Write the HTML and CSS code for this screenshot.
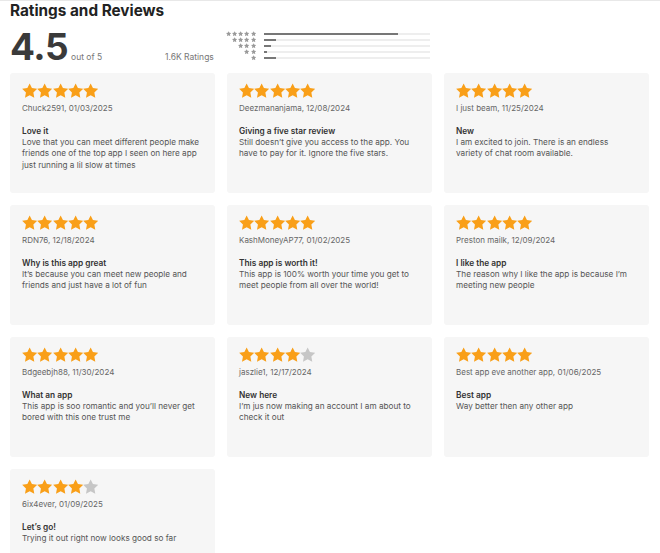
FILE: index.html
```html
<!DOCTYPE html>
<html>
<head>
<meta charset="utf-8">
<link rel="stylesheet" href="styles.css">
</head>
<body>
<svg width="0" height="0" style="position:absolute">
  <defs>
    <symbol id="star" viewBox="0 0 24 24"><path d="M12 .6l3.67 7.57 8.33 1.15-6.06 5.83 1.48 8.28L12 19.46l-7.42 3.97 1.48-8.28L0 9.32l8.33-1.15z"/></symbol>
  </defs>
</svg>
<div class="page">
  <h1 class="title">Ratings and Reviews</h1>
  <div class="summary">
    <div class="score"><span class="big">4.5</span><span class="outof">out of 5</span></div>
    <div class="count">1.6K Ratings</div>
    <div class="hist">
      <div class="hrow"><div class="hstars"><svg class="hs"><use href="#star"/></svg><svg class="hs"><use href="#star"/></svg><svg class="hs"><use href="#star"/></svg><svg class="hs"><use href="#star"/></svg><svg class="hs"><use href="#star"/></svg></div><div class="track"><div class="fill" style="width:81%"></div></div></div>
      <div class="hrow"><div class="hstars"><svg class="hs"><use href="#star"/></svg><svg class="hs"><use href="#star"/></svg><svg class="hs"><use href="#star"/></svg><svg class="hs"><use href="#star"/></svg></div><div class="track"><div class="fill" style="width:7%"></div></div></div>
      <div class="hrow"><div class="hstars"><svg class="hs"><use href="#star"/></svg><svg class="hs"><use href="#star"/></svg><svg class="hs"><use href="#star"/></svg></div><div class="track"><div class="fill" style="width:4%"></div></div></div>
      <div class="hrow"><div class="hstars"><svg class="hs"><use href="#star"/></svg><svg class="hs"><use href="#star"/></svg></div><div class="track"><div class="fill" style="width:2%"></div></div></div>
      <div class="hrow"><div class="hstars"><svg class="hs"><use href="#star"/></svg></div><div class="track"><div class="fill" style="width:7%"></div></div></div>
    </div>
  </div>
  <div class="grid">
    <div class="card">
      <div class="stars"><svg class="s on"><use href="#star"/></svg><svg class="s on"><use href="#star"/></svg><svg class="s on"><use href="#star"/></svg><svg class="s on"><use href="#star"/></svg><svg class="s on"><use href="#star"/></svg></div>
      <div class="author">Chuck2591, 01/03/2025</div>
      <div class="rtitle">Love it</div>
      <div class="body">Love that you can meet different people make friends one of the top app I seen on here app just running a lil slow at times</div>
    </div>
    <div class="card">
      <div class="stars"><svg class="s on"><use href="#star"/></svg><svg class="s on"><use href="#star"/></svg><svg class="s on"><use href="#star"/></svg><svg class="s on"><use href="#star"/></svg><svg class="s on"><use href="#star"/></svg></div>
      <div class="author">Deezmananjama, 12/08/2024</div>
      <div class="rtitle">Giving a five star review</div>
      <div class="body">Still doesn’t give you access to the app. You have to pay for it. Ignore the five stars.</div>
    </div>
    <div class="card">
      <div class="stars"><svg class="s on"><use href="#star"/></svg><svg class="s on"><use href="#star"/></svg><svg class="s on"><use href="#star"/></svg><svg class="s on"><use href="#star"/></svg><svg class="s on"><use href="#star"/></svg></div>
      <div class="author">I just beam, 11/25/2024</div>
      <div class="rtitle">New</div>
      <div class="body">I am excited to join. There is an endless variety of chat room available.</div>
    </div>
    <div class="card">
      <div class="stars"><svg class="s on"><use href="#star"/></svg><svg class="s on"><use href="#star"/></svg><svg class="s on"><use href="#star"/></svg><svg class="s on"><use href="#star"/></svg><svg class="s on"><use href="#star"/></svg></div>
      <div class="author">RDN76, 12/18/2024</div>
      <div class="rtitle">Why is this app great</div>
      <div class="body">It’s because you can meet new people and friends and just have a lot of fun</div>
    </div>
    <div class="card">
      <div class="stars"><svg class="s on"><use href="#star"/></svg><svg class="s on"><use href="#star"/></svg><svg class="s on"><use href="#star"/></svg><svg class="s on"><use href="#star"/></svg><svg class="s on"><use href="#star"/></svg></div>
      <div class="author">KashMoneyAP77, 01/02/2025</div>
      <div class="rtitle">This app is worth it!</div>
      <div class="body">This app is 100% worth your time you get to meet people from all over the world!</div>
    </div>
    <div class="card">
      <div class="stars"><svg class="s on"><use href="#star"/></svg><svg class="s on"><use href="#star"/></svg><svg class="s on"><use href="#star"/></svg><svg class="s on"><use href="#star"/></svg><svg class="s on"><use href="#star"/></svg></div>
      <div class="author">Preston mailk, 12/09/2024</div>
      <div class="rtitle">I like the app</div>
      <div class="body">The reason why I like the app is because I’m meeting new people</div>
    </div>
    <div class="card">
      <div class="stars"><svg class="s on"><use href="#star"/></svg><svg class="s on"><use href="#star"/></svg><svg class="s on"><use href="#star"/></svg><svg class="s on"><use href="#star"/></svg><svg class="s on"><use href="#star"/></svg></div>
      <div class="author">Bdgeebjh88, 11/30/2024</div>
      <div class="rtitle">What an app</div>
      <div class="body">This app is soo romantic and you’ll never get bored with this one trust me</div>
    </div>
    <div class="card">
      <div class="stars"><svg class="s on"><use href="#star"/></svg><svg class="s on"><use href="#star"/></svg><svg class="s on"><use href="#star"/></svg><svg class="s on"><use href="#star"/></svg><svg class="s off"><use href="#star"/></svg></div>
      <div class="author">jaszlie1, 12/17/2024</div>
      <div class="rtitle">New here</div>
      <div class="body">I’m jus now making an account I am about to check it out</div>
    </div>
    <div class="card">
      <div class="stars"><svg class="s on"><use href="#star"/></svg><svg class="s on"><use href="#star"/></svg><svg class="s on"><use href="#star"/></svg><svg class="s on"><use href="#star"/></svg><svg class="s on"><use href="#star"/></svg></div>
      <div class="author">Best app eve another app, 01/06/2025</div>
      <div class="rtitle">Best app</div>
      <div class="body">Way better then any other app</div>
    </div>
    <div class="card">
      <div class="stars"><svg class="s on"><use href="#star"/></svg><svg class="s on"><use href="#star"/></svg><svg class="s on"><use href="#star"/></svg><svg class="s on"><use href="#star"/></svg><svg class="s off"><use href="#star"/></svg></div>
      <div class="author">6ix4ever, 01/09/2025</div>
      <div class="rtitle">Let’s go!</div>
      <div class="body">Trying it out right now looks good so far</div>
    </div>
  </div>
</div>
</body>
</html>
```
FILE: styles.css
```css
* { box-sizing: border-box; }
html, body { margin: 0; padding: 0; background: #fff; }
body {
  font-family: Inter, "Noto Sans", "Liberation Sans", sans-serif;
  color: #333;
  overflow: hidden;
  border-top: 1px solid #e8e8e8;
}
.page { padding: 0 11px 0 10px; }
.title {
  margin: 0;
  padding-top: 0;
  font-size: 15.3px;
  font-weight: 700;
  color: #222;
  line-height: 19px;
}
.summary {
  display: flex;
  align-items: flex-start;
  height: 53px;
}
.score {
  display: flex;
  align-items: baseline;
  width: 155px;
  padding-top: 10px;
}
.big {
  font-size: 37px;
  font-weight: 700;
  color: #3a3a3a;
  letter-spacing: -0.5px;
  line-height: 34px;
}
.outof {
  font-size: 8.5px;
  color: #777;
  margin-left: 3px;
}
.count {
  font-size: 8.5px;
  color: #777;
  padding-top: 32px;
  width: 52px;
}
.hist {
  display: flex;
  flex-direction: column;
  padding-top: 11px;
  margin-left: 6px;
}
.hrow {
  display: flex;
  align-items: center;
  height: 6px;
}
.hstars {
  width: 33px;
  display: flex;
  justify-content: flex-end;
  gap: 1px;
}
.hs { width: 5.3px; height: 5.3px; fill: #9a9a9a; }
.track {
  margin-left: 8px;
  width: 166px;
  height: 2px;
  background: #eeeeee;
}
.fill { height: 2px; background: #777; }
.grid {
  display: grid;
  grid-template-columns: 205px 205px 205px;
  grid-auto-rows: 120px;
  column-gap: 12px;
  row-gap: 12px;
}
.card {
  background: #f6f6f6;
  border-radius: 3px;
  padding: 10px 12px;
}
.stars { display: flex; height: 15px; }
.s { width: 15.3px; height: 15px; }
.s.on { fill: #f99f18; }
.s.off { fill: #c6c6c6; }
.author {
  margin-top: 4px;
  font-size: 8px;
  color: #666;
  line-height: 12px;
}
.rtitle {
  margin-top: 11px;
  font-size: 8.3px;
  font-weight: 600;
  color: #333;
  line-height: 12px;
}
.body {
  font-size: 8.2px;
  color: #555;
  line-height: 11.3px;
}
```
